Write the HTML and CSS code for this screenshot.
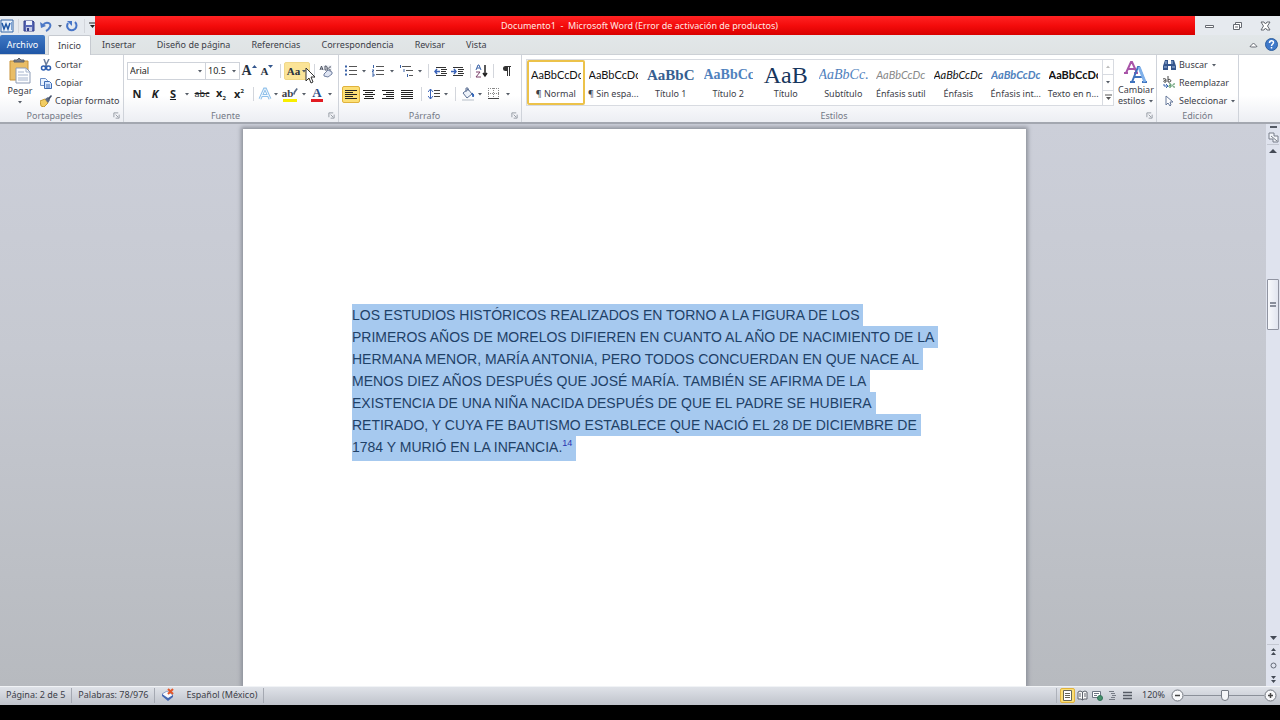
FILE: index.html
```html
<!DOCTYPE html>
<html lang="es">
<head>
<meta charset="utf-8">
<title>Documento1 - Microsoft Word</title>
<link rel="stylesheet" href="styles.css">
</head>
<body>
<svg class="defs" aria-hidden="true">
  <symbol id="caret" viewBox="0 0 6 4"><path d="M1 1h4L3 3.5z" fill="#555c66"/></symbol>
  <symbol id="launch" viewBox="0 0 8 8"><path d="M1 6V1h5M3 3l3 3M7 3v4H3" fill="none" stroke="#8d929c"/></symbol>
</svg>
<div class="app">
  <header class="titlebar">
    <div class="quick">
      <svg width="14" height="14" viewBox="0 0 14 14"><path d="M1 1h12v12H1z" fill="#e8f1fb" stroke="#3566a8"/><path d="M2 4l2 6 2-5 2 5 2-6" fill="none" stroke="#1f57a5" stroke-width="1.500"/><path d="M11.500 3v8" stroke="#7da3d4"/></svg>
      <i class="sep narrow"></i>
      <button class="w14" aria-label="Guardar"><svg width="12" height="12" viewBox="0 0 12 12"><path d="M1 1h9l1 1v9H1z" fill="#5767b5" stroke="#333f8a"/><path d="M3 1h6v4H3z" fill="#eef2fb"/><path d="M3 7h6v4H3z" fill="#c3cae6"/><path d="M4 8h2v3H4z" fill="#333f8a"/></svg></button>
      <button class="w20" aria-label="Deshacer"><svg width="12" height="12" viewBox="0 0 12 12"><path d="M3 5c3-4 9-2 7 2-1 2-2 3-4 4" fill="none" stroke="#4c78c6" stroke-width="2"/><path d="M0 2l1 6 5-2z" fill="#4c78c6"/></svg></button>
      <button class="w8" aria-label="Opciones de deshacer"><svg width="6" height="4"><use href="#caret"/></svg></button>
      <button class="w16" aria-label="Rehacer"><svg width="12" height="12" viewBox="0 0 12 12"><path d="M2 3c-3 6 3 9 7 6 2-2 2-5 0-7" fill="none" stroke="#4775c7" stroke-width="2"/><path d="M1 1h5v5z" fill="#4775c7"/></svg></button>
      <i class="sep narrow"></i>
      <button class="w8" aria-label="Personalizar"><svg width="7" height="7" viewBox="0 0 7 7"><path d="M0 1h7" stroke="#222"/><path d="M1 3h5L3.500 6z" fill="#222"/></svg></button>
    </div>
    <h1 class="title">Documento1&nbsp; -&nbsp; Microsoft Word (Error de activación de productos)</h1>
    <div class="winbtns">
      <button aria-label="Minimizar"><svg width="11" height="10" viewBox="0 0 11 10"><path d="M1.500 4.500h8v2h-8z" fill="#fff" stroke="#656970"/></svg></button>
      <button aria-label="Restaurar"><svg width="11" height="10" viewBox="0 0 11 10"><path d="M3.500 1.500h6v5h-6z" fill="#fff" stroke="#656970"/><path d="M1.500 3.500h6v5h-6z" fill="#fff" stroke="#656970"/><path d="M3 6h3" stroke="#656970"/></svg></button>
      <button aria-label="Cerrar"><svg width="11" height="10" viewBox="0 0 11 10"><path d="M1 1h3l1.500 2L7 1h3L7.500 5 10 9H7L5.500 7 4 9H1l2.500-4z" fill="#fff" stroke="#656970"/></svg></button>
    </div>
  </header>

  <nav class="tabs">
    <button class="file">Archivo</button>
    <button class="tab active">Inicio</button>
    <button class="tab">Insertar</button>
    <button class="tab">Diseño de página</button>
    <button class="tab">Referencias</button>
    <button class="tab">Correspondencia</button>
    <button class="tab">Revisar</button>
    <button class="tab">Vista</button>
    <span class="grow"></span>
    <button class="w16" aria-label="Minimizar la cinta"><svg width="9" height="6" viewBox="0 0 9 6"><path d="M1 4.500L4.500 1 8 4.500l-1.500.5h-4z" fill="#fff" stroke="#666b73"/></svg></button>
    <button class="w18" aria-label="Ayuda"><svg width="13" height="13" viewBox="0 0 13 13"><circle cx="6.500" cy="6.500" r="6" fill="#3f79c9" stroke="#2f5f9f"/><path d="M4.500 5c0-3 4-3 4-.5 0 1.500-2 1.500-2 3.500M6.500 9v1.500" fill="none" stroke="#fff" stroke-width="1.500"/></svg></button>
  </nav>

  <section class="ribbon">
    <div class="group clip">
      <div class="body">
        <button class="paste"><svg width="24" height="26" viewBox="0 0 24 26"><path d="M2 3h18v19H2z" fill="#e9bd66" stroke="#c89338"/><path d="M6 4h10V2h-3l-2-2-2 2H6z" fill="#777d88" stroke="#5c6069"/><path d="M8 10h10l4 4v11H8z" fill="#fdfeff" stroke="#8c9bb5"/><path d="M18 10v4h4M10 14h6M10 17h10M10 20h10M10 22h10" fill="none" stroke="#a6b4cd"/></svg><span>Pegar</span><svg width="6" height="4"><use href="#caret"/></svg></button>
        <div class="cmds">
          <button><svg width="12" height="12" viewBox="0 0 12 12"><path d="M4 0l3 8M9 0L5 8" stroke="#6b7d9c" stroke-width="1.500"/><circle cx="3.500" cy="9" r="2" fill="none" stroke="#2c5db0" stroke-width="1.500"/><circle cx="8.500" cy="9" r="2" fill="none" stroke="#2c5db0" stroke-width="1.500"/></svg>Cortar</button>
          <button><svg width="12" height="12" viewBox="0 0 12 12"><path d="M.5 1.500h5l2 2v5h-7z" fill="#eaf3ff" stroke="#6d8fc6"/><path d="M4.500 4.500h5l2 2v5h-7z" fill="#d5e6ff" stroke="#3d6bb3"/><path d="M6 8h4M6 10h4" stroke="#3d6bb3"/></svg>Copiar</button>
          <button><svg width="12" height="12" viewBox="0 0 12 12"><path d="M0 6l5-2 3 4-4 4-3-1z" fill="#f2cd63" stroke="#c69b35"/><path d="M5 4l3-2 2 3-2 3z" fill="#5d6b85"/><path d="M8 3l3-3 1 1-3 4z" fill="#42506a"/></svg>Copiar formato</button>
        </div>
      </div>
      <footer><span>Portapapeles</span><button aria-label="Portapapeles: más"><svg width="7" height="7"><use href="#launch"/></svg></button></footer>
    </div>

    <div class="group font">
      <div class="body rows">
        <div class="row">
          <label class="combo face"><select aria-label="Fuente"><option>Arial</option></select><svg width="6" height="4"><use href="#caret"/></svg></label>
          <label class="combo size"><select aria-label="Tamaño"><option>10.5</option></select><svg width="6" height="4"><use href="#caret"/></svg></label>
          <button class="w18 glyph g14" aria-label="Agrandar fuente">A<svg class="tip" width="5" height="4" viewBox="0 0 5 4"><path d="M0 3l2.500-3L5 3z" fill="#33568e"/></svg></button>
          <button class="w18 glyph g11" aria-label="Encoger fuente">A<svg class="tip" width="5" height="4" viewBox="0 0 5 4"><path d="M0 0l2.500 3L5 0z" fill="#33568e"/></svg></button>
          <i class="sep narrow"></i>
          <button class="case glyph" aria-label="Cambiar mayúsculas y minúsculas">Aa<svg width="6" height="4"><use href="#caret"/></svg></button>
          <i class="sep narrow"></i>
          <button class="w16" aria-label="Borrar formato"><svg width="14" height="14" viewBox="0 0 14 14"><path d="M4 1h9v6H4z" fill="#f2f4f9"/><path d="M1 6l1.500-4L4 6M2 5h2M6 2v4h1.500c1.500 0 1.500-2 0-2 1.500 0 1-2-1.500-2M12 3c-3-1-3 4 0 3" fill="none" stroke="#4a5160"/><path d="M5 10l4-4 4 2v2l-4 3-4-1z" fill="#dfe5f3" stroke="#7180a0"/></svg></button>
          <svg class="cursor" width="12" height="18" viewBox="0 0 12 18"><path d="M1 1v13l3-3 2 5 2-1-2-5h4z" fill="#fff" stroke="#333"/></svg>
        </div>
        <div class="row">
          <button class="w18 fmt"><b>N</b></button>
          <button class="w18 fmt"><b><em>K</em></b></button>
          <button class="w18 fmt"><b><u>S</u></b></button>
          <button class="w10" aria-label="Subrayado"><svg width="6" height="4"><use href="#caret"/></svg></button>
          <button class="w20 fmt"><s>abc</s></button>
          <button class="w18 fmt"><b>x<sub>2</sub></b></button>
          <button class="w18 fmt"><b>x<sup>2</sup></b></button>
          <i class="sep"></i>
          <button class="w14" aria-label="Efectos de texto"><svg width="14" height="14" viewBox="0 0 14 14"><path d="M2 12L6.500 2h1L12 12M4 8.500h6" fill="none" stroke="#8fc0ea" stroke-width="3"/><path d="M2 12L6.500 2h1L12 12M4 8.500h6" fill="none" stroke="#f2f9ff"/></svg></button>
          <button class="w8" aria-label="Más efectos"><svg width="6" height="4"><use href="#caret"/></svg></button>
          <button class="w20 mark yellow" aria-label="Resaltado"><span>ab</span><svg class="pen" width="5" height="9" viewBox="0 0 6 9"><path d="M1 8l1-3 3-4" fill="none" stroke="#5b6c88" stroke-width="2"/></svg></button>
          <button class="w8" aria-label="Color de resaltado"><svg width="6" height="4"><use href="#caret"/></svg></button>
          <button class="w18 mark red" aria-label="Color de fuente"><span class="bluea">A</span></button>
          <button class="w8" aria-label="Más colores"><svg width="6" height="4"><use href="#caret"/></svg></button>
        </div>
      </div>
      <footer><span>Fuente</span><button aria-label="Fuente: más"><svg width="7" height="7"><use href="#launch"/></svg></button></footer>
    </div>

    <div class="group para">
      <div class="body rows">
        <div class="row">
          <button class="w18" aria-label="Viñetas"><svg width="12" height="12" viewBox="0 0 12 12"><path d="M0 1.500h2M0 5.500h2M0 9.500h2" stroke="#3a63a8" stroke-width="2"/><path d="M4 1.500h8M4 5.500h8M4 9.500h8" stroke="#555"/></svg></button>
          <button class="w8" aria-label="Más viñetas"><svg width="6" height="4"><use href="#caret"/></svg></button>
          <button class="w20" aria-label="Numeración"><svg width="12" height="12" viewBox="0 0 12 12"><path d="M1.500 0v3M0 5h2L0 7h2M0 9h2v2H0" fill="none" stroke="#3a63a8"/><path d="M4 1.500h8M4 5.500h8M4 9.500h8" stroke="#555"/></svg></button>
          <button class="w8" aria-label="Más numeración"><svg width="6" height="4"><use href="#caret"/></svg></button>
          <button class="w20" aria-label="Lista multinivel"><svg width="15" height="13" viewBox="0 0 15 13"><path d="M1.500 0v3M5 4v3M8.500 9v3" stroke="#3a63a8"/><path d="M3 1.500h9M7 5.500h7M10 10.500h4" stroke="#555"/></svg></button>
          <button class="w8" aria-label="Más listas"><svg width="6" height="4"><use href="#caret"/></svg></button>
          <i class="sep narrow"></i>
          <button class="w16" aria-label="Disminuir sangría"><svg width="13" height="11" viewBox="0 0 13 11"><path d="M2 1.500h10M7 3.500h6M7 5.500h5M7 7.500h6M2 9.500h10" stroke="#333"/><path d="M6 5.500H1M3 3L1 5.500 3 8" fill="none" stroke="#3a63b8" stroke-width="1.500"/></svg></button>
          <button class="w18" aria-label="Aumentar sangría"><svg width="13" height="11" viewBox="0 0 13 11"><path d="M2 1.500h10M7 3.500h6M7 5.500h5M7 7.500h6M2 9.500h10" stroke="#333"/><path d="M0 5.500h5M3 3l2 2.500L3 8" fill="none" stroke="#3a63b8" stroke-width="1.500"/></svg></button>
          <i class="sep narrow"></i>
          <button class="w14" aria-label="Ordenar"><svg width="13" height="14" viewBox="0 0 13 14"><path d="M1 6l2-5h1l2 5M2 4h3" fill="none" stroke="#3a63a8"/><path d="M1 8h4l-4 5h5" fill="none" stroke="#7b3e68"/><path d="M10 1v10M8 9l2 3 2-3" fill="none" stroke="#222" stroke-width="1.500"/></svg></button>
          <i class="sep"></i>
          <button class="w18" aria-label="Mostrar todo"><svg width="10" height="12" viewBox="0 0 10 12"><path d="M5 1H3.500a2.500 2.500 0 000 5H5z" fill="#333"/><path d="M4 1.500h5M5.500 1v10M7.500 1v10" stroke="#333"/></svg></button>
        </div>
        <div class="row">
          <button class="w18 on" aria-label="Izquierda"><svg width="12" height="11" viewBox="0 0 12 11"><path d="M0 1.500h12M0 3.500h8M0 5.500h12M0 7.500h8M0 9.500h12" stroke="#222"/></svg></button>
          <button class="w18" aria-label="Centrar"><svg width="12" height="11" viewBox="0 0 12 11"><path d="M0 1.500h12M2 3.500h8M0 5.500h12M2 7.500h8M1 9.500h10" stroke="#222"/></svg></button>
          <button class="w20" aria-label="Derecha"><svg width="12" height="11" viewBox="0 0 12 11"><path d="M0 1.500h12M4 3.500h8M1 5.500h11M4 7.500h8M0 9.500h12" stroke="#222"/></svg></button>
          <button class="w18" aria-label="Justificar"><svg width="12" height="11" viewBox="0 0 12 11"><path d="M0 1.500h12M0 3.500h12M0 5.500h12M0 7.500h12M0 9.500h12" stroke="#222"/></svg></button>
          <i class="sep"></i>
          <button class="w16" aria-label="Interlineado"><svg width="12" height="12" viewBox="0 0 12 12"><path d="M2.500 1v10M0 4l2.500-3L5 4M0 8l2.500 3L5 8" fill="none" stroke="#3a63b8"/><path d="M6 2.500h6M6 5.500h6M6 8.500h6" stroke="#444"/></svg></button>
          <button class="w8" aria-label="Más interlineado"><svg width="6" height="4"><use href="#caret"/></svg></button>
          <i class="sep"></i>
          <button class="w16" aria-label="Sombreado"><svg width="14" height="14" viewBox="0 0 14 14"><path d="M2 6l5-4 4 5-5 4z" fill="#eef3fa" stroke="#5a6f93"/><path d="M5 5V1h2v3" fill="none" stroke="#5a6f93"/><path d="M11 6c2 1 2 3 1 4z" fill="#2c62b8" stroke="#2c62b8"/><path d="M1 12h12v2H1z" fill="#d9dde2"/></svg></button>
          <button class="w8" aria-label="Más sombreado"><svg width="6" height="4"><use href="#caret"/></svg></button>
          <button class="w20" aria-label="Bordes"><svg width="12" height="12" viewBox="0 0 12 12"><path d="M.5 0v11M5.500 0v11M10.500 0v11M0 .5h11M0 5.500h11" fill="none" stroke="#888" stroke-dasharray="1 1"/><path d="M0 10.500h11" stroke="#444"/></svg></button>
          <button class="w8" aria-label="Más bordes"><svg width="6" height="4"><use href="#caret"/></svg></button>
        </div>
      </div>
      <footer><span>Párrafo</span><button aria-label="Párrafo: más"><svg width="7" height="7"><use href="#launch"/></svg></button></footer>
    </div>

    <div class="group styles">
      <div class="body">
        <div class="gallery">
          <button class="style chosen"><span class="pv">AaBbCcDc</span><span>¶ Normal</span></button>
          <button class="style"><span class="pv">AaBbCcDc</span><span>¶ Sin espa...</span></button>
          <button class="style"><span class="pv h1">AaBbC</span><span>Título 1</span></button>
          <button class="style"><span class="pv h2">AaBbCc</span><span>Título 2</span></button>
          <button class="style"><span class="pv tt">AaB</span><span>Título</span></button>
          <button class="style"><span class="pv st">AaBbCc.</span><span>Subtítulo</span></button>
          <button class="style"><span class="pv es">AaBbCcDc</span><span>Énfasis sutil</span></button>
          <button class="style"><span class="pv en">AaBbCcDc</span><span>Énfasis</span></button>
          <button class="style"><span class="pv ei">AaBbCcDc</span><span>Énfasis int...</span></button>
          <button class="style"><span class="pv tn">AaBbCcDc</span><span>Texto en n...</span></button>
          <div class="spin">
            <button aria-label="Arriba"><svg width="6" height="4" viewBox="0 0 6 4"><path d="M1 3h4L3 .5z" fill="#bbb"/></svg></button>
            <button aria-label="Abajo"><svg width="6" height="4"><use href="#caret"/></svg></button>
            <button aria-label="Más estilos"><svg width="7" height="7" viewBox="0 0 7 7"><path d="M0 1h7" stroke="#555"/><path d="M1 3h5L3.500 6z" fill="#555"/></svg></button>
          </div>
        </div>
        <button class="change"><svg width="24" height="24" viewBox="0 0 24 24"><path d="M2 13L7 2h1l5 11M4 9h7M0 13h4M10 13h4" fill="none" stroke="#a854a8" stroke-width="2"/><path d="M8 22l6-15h1l6 15M10 17h9M6 22h5M18 22h5" fill="none" stroke="#3e72bd" stroke-width="2"/><path d="M15 7l6 15" stroke="#7fb0ea" stroke-width="3"/></svg><span>Cambiar</span><span class="drop">estilos<svg width="6" height="4"><use href="#caret"/></svg></span></button>
      </div>
      <footer><span>Estilos</span><button aria-label="Estilos: más"><svg width="7" height="7"><use href="#launch"/></svg></button></footer>
    </div>

    <div class="group edit">
      <div class="body">
        <div class="cmds">
          <button><svg width="13" height="12" viewBox="0 0 13 12"><path d="M2 1h3v4h3V1h3l2 6v4H8V7H5v4H0V7z" fill="#34558c"/><path d="M1 8h3M9 8h3M3 2v3M9 2v3" stroke="#a6c0e6"/></svg>Buscar<svg width="6" height="4"><use href="#caret"/></svg></button>
          <button><svg width="13" height="13" viewBox="0 0 13 13"><path d="M0 3c3-1 3 0 3 3-3 1-3-2 0-2M5 0v6h2c2-1 0-4-2-2" fill="none" stroke="#444"/><path d="M1 8v2h3M3 8l2 2-2 2" fill="none" stroke="#3b67b1"/><path d="M6 8c2-1 2 0 2 3-3 1-3-2 0-2M12 8c-3-1-3 4 0 3" fill="none" stroke="#3f8752"/></svg>Reemplazar</button>
          <button><svg width="13" height="12" viewBox="0 0 13 12"><path d="M3 1v9l2-2 2 3 1-1-1-3h3z" fill="#fff" stroke="#66799b"/></svg>Seleccionar<svg width="6" height="4"><use href="#caret"/></svg></button>
        </div>
      </div>
      <footer><span>Edición</span></footer>
    </div>
  </section>

  <main class="work">
    <div class="canvas">
      <article class="page">
        <p>
          <span>LOS ESTUDIOS HISTÓRICOS REALIZADOS EN TORNO A LA FIGURA DE LOS</span>
          <span>PRIMEROS AÑOS DE MORELOS DIFIEREN EN CUANTO AL AÑO DE NACIMIENTO DE LA</span>
          <span>HERMANA MENOR, MARÍA ANTONIA, PERO TODOS CONCUERDAN EN QUE NACE AL</span>
          <span>MENOS DIEZ AÑOS DESPUÉS QUE JOSÉ MARÍA. TAMBIÉN SE AFIRMA DE LA</span>
          <span>EXISTENCIA DE UNA NIÑA NACIDA DESPUÉS DE QUE EL PADRE SE HUBIERA</span>
          <span>RETIRADO, Y CUYA FE BAUTISMO ESTABLECE QUE NACIÓ EL 28 DE DICIEMBRE DE</span>
          <span>1784 Y MURIÓ EN LA INFANCIA.<sup>14</sup></span>
        </p>
      </article>
    </div>
    <div class="scroll">
      <svg width="12" height="32" viewBox="0 0 12 32"><path d="M3 3h7" stroke="#555b66" stroke-width="2"/><path d="M2 9h5v3h4v6H6v-3H2zM4 12l6 5" fill="#f4f6fa" stroke="#777d89"/><path d="M0 20.500h12" stroke="#c3c7d1"/><path d="M2 29h8L6 25z" fill="#444a55"/></svg>
      <div class="lane"><button class="thumb" aria-label="Desplazar"><i></i><i></i></button></div>
      <svg width="12" height="54" viewBox="0 0 12 54"><path d="M3 4h7L6.500 8z" fill="#444a55"/><path d="M0 12.500h12" stroke="#c3c7d1"/><path d="M4 19h5L6.500 16zM4 23h5L6.500 20zM4 44h5L6.500 47zM4 48h5L6.500 51z" fill="#444a55"/><circle cx="6.500" cy="33.500" r="2.500" fill="none" stroke="#666c78"/></svg>
    </div>
  </main>

  <footer class="status">
    <span class="cell">Página: 2 de 5</span>
    <span class="cell">Palabras: 78/976</span>
    <span class="cell lang"><svg width="14" height="14" viewBox="0 0 14 14"><path d="M1 6l5-3 6 4-5 5z" fill="#f7f9fd" stroke="#8fa2c8"/><path d="M1 6l6 4 5-3v2l-5 4-6-5z" fill="#4468b2"/><path d="M7 1l5 5M12 1L7 6" stroke="#e2572b" stroke-width="2"/></svg>Español (México)</span>
    <span class="grow"></span>
    <div class="views">
      <button class="on" aria-label="Diseño de impresión"><svg width="11" height="11" viewBox="0 0 11 11"><path d="M1.500.5h8v10h-8z" fill="#fff" stroke="#665"/><path d="M3 3.500h5M3 5.500h5M3 7.500h5" stroke="#665"/></svg></button>
      <button aria-label="Lectura"><svg width="11" height="11" viewBox="0 0 11 11"><path d="M1 2l2-1 2.500 1L8 1l2 1v7H7l-1.500 1L4 9H1zM5.500 2v8M2 4h2M2 6h2M7 4h2M7 6h2" fill="#fafafa" stroke="#5c616b"/></svg></button>
      <button aria-label="Diseño web"><svg width="11" height="11" viewBox="0 0 11 11"><path d="M.5 1.500h8v6h-8z" fill="#fff" stroke="#6d7684"/><path d="M2 3.500h5M2 5.500h3" stroke="#6d7684"/><circle cx="8" cy="8" r="2.500" fill="#45916b" stroke="#327259"/></svg></button>
      <button aria-label="Esquema"><svg width="11" height="11" viewBox="0 0 11 11"><path d="M2 1.500h5M4 3.500h4M5 5.500h4M4 7.500h4M2 9.500h6" stroke="#777d86"/></svg></button>
      <button aria-label="Borrador"><svg width="11" height="11" viewBox="0 0 11 11"><path d="M1 2.500h9M1 5.500h9M1 8.500h9" stroke="#555b64" stroke-width="1.500"/></svg></button>
    </div>
    <span class="pct">120%</span>
    <button aria-label="Alejar"><svg width="13" height="13" viewBox="0 0 13 13"><circle cx="6.500" cy="6.500" r="5.500" fill="#f8f9fb" stroke="#70757e"/><path d="M4 6.500h5" stroke="#444" stroke-width="1.500"/></svg></button>
    <input class="zoom" type="range" min="0" max="100" value="52" aria-label="Zoom">
    <button aria-label="Acercar"><svg width="13" height="13" viewBox="0 0 13 13"><circle cx="6.500" cy="6.500" r="5.500" fill="#f8f9fb" stroke="#70757e"/><path d="M4 6.500h5M6.500 4v5" stroke="#444" stroke-width="1.500"/></svg></button>
  </footer>
</div>
</body>
</html>
```
FILE: styles.css
```css
* { box-sizing: border-box; }
body { margin: 0; background: #000; color: #3c4048; font: 9px/12px "Noto Sans", "Open Sans", sans-serif; }
button { display: flex; align-items: center; justify-content: center; flex: none; padding: 0; border: 0; background: none; color: inherit; font: inherit; white-space: nowrap; }
svg { flex: none; display: block; }
.defs { position: absolute; width: 0; height: 0; }
.app { display: flex; flex-direction: column; height: 100vh; padding: 16px 0 15px; }
.grow { flex: 1; }
.sep { flex: none; width: 10px; height: 14px; background: linear-gradient(#d3d6dc, #d3d6dc) center / 1px 100% no-repeat; }
.sep.narrow { width: 8px; }
.w8 { width: 8px; }
.w10 { width: 10px; }
.w14 { width: 14px; }
.w16 { width: 16px; }
.w18 { width: 18px; }
.w20 { width: 20px; }

.titlebar { display: flex; height: 19px; background: #e6eaef; }
.quick { display: flex; align-items: center; width: 95px; }
.title { flex: 1; margin: 0; padding-right: 11px; background: linear-gradient(#ff2323, #f40c0c 50%, #d80000); color: #ffe9e4; font-size: 9px; font-weight: 400; line-height: 19px; text-align: center; }
.winbtns { display: flex; align-items: center; justify-content: space-around; width: 85px; }

.tabs { display: flex; align-items: stretch; gap: 1px; height: 20px; background: linear-gradient(#e2e7e9, #dfe3e4); border-bottom: 1px solid #cdd1d6; }
.file { width: 45px; margin-right: 2px; border-radius: 2px 2px 0 0; background: linear-gradient(#3f78c4, #1f56a6); color: #fff; }
.tab { padding: 0 10px; }
.tab.active { margin-bottom: -1px; padding: 0 9px; border: 1px solid #c6cad0; border-bottom: 0; border-radius: 2px 2px 0 0; background: #fff; }

.ribbon { display: flex; height: 69px; background: linear-gradient(#fff 60%, #eceef3); border-bottom: 2px solid #a3a7b0; }
.group { display: flex; flex: none; flex-direction: column; border-right: 1px solid #cfd3da; }
.body { display: flex; flex: 1; padding-top: 5px; }
.group > footer { display: flex; align-items: center; height: 13px; color: #737985; }
.group > footer span { flex: 1; text-align: center; }
.group > footer button { width: 14px; }
.rows { flex-direction: column; gap: 1px; }
.row { position: relative; display: flex; align-items: center; height: 22px; }
.clip { width: 124px; }
.font { width: 215px; padding-left: 3px; }
.font .row + .row { padding-left: 1px; }
.para { width: 183px; padding-left: 3px; }
.group.styles { flex: 1; min-width: 0; padding-left: 4px; }
.edit { width: 82px; margin-right: 41px; }

.paste { flex-direction: column; justify-content: flex-start; width: 40px; }
.paste span { margin: 1px 0 3px; }
.cmds { display: flex; flex-direction: column; gap: 5px; }
.cmds button { justify-content: flex-start; gap: 3px; height: 13px; }
.clip .body { padding-top: 3px; }
.edit .body { padding: 3px 0 0 6px; }

.combo { display: grid; align-items: center; height: 18px; border: 1px solid #cfd3da; background: #fff; }
.combo > * { grid-area: 1 / 1; }
.combo svg { justify-self: end; margin-right: 2px; }
.combo select { width: 100%; height: 16px; padding: 0 2px; appearance: none; border: 0; background: none; color: #222; font: inherit; }
.face { width: 79px; }
.size { width: 35px; margin-left: -1px; }
.glyph { color: #26303f; font-family: "Liberation Serif", serif; font-weight: 700; }
.g14 { font-size: 14px; }
.g11 { font-size: 11px; }
.tip { align-self: flex-start; }
.case { gap: 1px; width: 26px; height: 18px; border: 1px solid #f0d889; border-radius: 2px; background: #fbe497; font-size: 11px; }
.cursor { position: absolute; left: 178px; top: 7px; }
.fmt { color: #1c1f24; font-size: 11px; }
.fmt s { font-size: 9px; }
.fmt sub, .fmt sup { font-size: 6px; line-height: 1; }
.mark { position: relative; height: 15px; border: solid transparent; border-width: 0 3px; font: 700 11px/12px "Liberation Serif", serif; align-items: flex-start; }
.mark::after { content: ""; position: absolute; left: 0; right: 0; bottom: 0; height: 3px; background: #f8ee00; }
.red::after { background: #e21b22; }
.bluea { color: #2b4c86; font-size: 13px; }
.on { height: 17px; border: 1px solid #e0b23c; border-radius: 2px; background: #fcdf75; }

.styles .body { gap: 2px; padding-top: 4px; }
.gallery { display: flex; flex: 1; min-width: 0; height: 47px; border: 1px solid #d8dbe1; background: #fff; }
.style { flex: 1 1 0; min-width: 0; flex-direction: column; justify-content: flex-end; height: 45px; padding: 0 3px 4px; border: 1px solid transparent; }
.chosen { border: 2px solid #ecc24a; border-radius: 2px; padding: 0 2px 3px; }
.pv { width: 100%; height: 22px; margin-bottom: 2px; overflow: hidden; color: #111; font: 11px/22px Lato, "Open Sans", sans-serif; }
.h1 { color: #365f91; font: 700 15px/22px "Liberation Serif", serif; }
.h2 { color: #4f81bd; font: 700 14px/22px "Liberation Serif", serif; }
.tt { color: #17365d; font: 24px/22px "Liberation Serif", serif; }
.st { color: #4f81bd; font: italic 14px/22px "Liberation Serif", serif; }
.es { color: #888; font-style: italic; }
.en { font-style: italic; }
.ei { color: #4f81bd; font-style: italic; font-weight: 700; }
.tn { font-weight: 700; }
.spin { display: flex; flex-direction: column; width: 11px; border-left: 1px solid #d8dbe1; }
.spin button { flex: 1; }
.spin button + button { border-top: 1px solid #d8dbe1; }
.change { flex-direction: column; justify-content: flex-start; width: 40px; padding-top: 1px; }
.drop { display: flex; align-items: center; gap: 3px; line-height: 10px; }

.work { display: flex; flex: 1; min-height: 0; }
.canvas { display: flex; justify-content: center; flex: 1; padding: 5px 0 0 3px; overflow: hidden; background: linear-gradient(#cccfd9, #c6c9d1 40%, #b7babf); }
.page { width: 62%; padding: 175px 0 0 109px; background: #fff; box-shadow: 0 0 4px 2px #8e929b; }
.page p { margin: 0; color: #1f4167; font: 14px/22px "Liberation Sans", Arial, sans-serif; white-space: nowrap; }
.page span { display: block; width: fit-content; padding-right: 4px; background: #a6c9ef; }
.page span:last-child { padding-bottom: 3px; }
.page sup { color: #2a35b0; font-size: 9px; line-height: 1; }
.scroll { display: flex; flex-direction: column; align-items: center; width: 14px; background: #dfe3ee; }
.lane { flex: 1; width: 12px; padding-top: 123px; }
.thumb { flex-direction: column; gap: 1px; width: 12px; height: 51px; border: 1px solid #9094a1; border-radius: 1px; background: linear-gradient(90deg, #f8f9fc, #e1e5ef); }
.thumb i { width: 6px; height: 2px; background: #8a8f9c; }

.status { display: flex; align-items: center; height: 19px; padding: 0 3px 1px 6px; background: linear-gradient(#e1e4ea, #bfc3cb); box-shadow: inset 0 1px #f1f3f6; }
.cell { display: flex; align-items: center; height: 15px; margin-right: 6px; padding-right: 6px; border-right: 1px solid #a5a9b2; }
.lang { gap: 11px; }
.views { display: flex; align-items: center; padding-left: 3px; border-left: 1px solid #aeb2ba; }
.views button { width: 15px; height: 15px; }
.pct { padding: 0 6px 0 7px; }
.zoom { appearance: none; width: 80px; height: 13px; margin: 0; background: linear-gradient(#8b9099, #8b9099) center / 100% 1px no-repeat; }
.zoom::-webkit-slider-thumb { appearance: none; width: 8px; height: 11px; border: 1px solid #747983; border-radius: 1px 1px 4px 4px; background: #f5f6f8; }
```
